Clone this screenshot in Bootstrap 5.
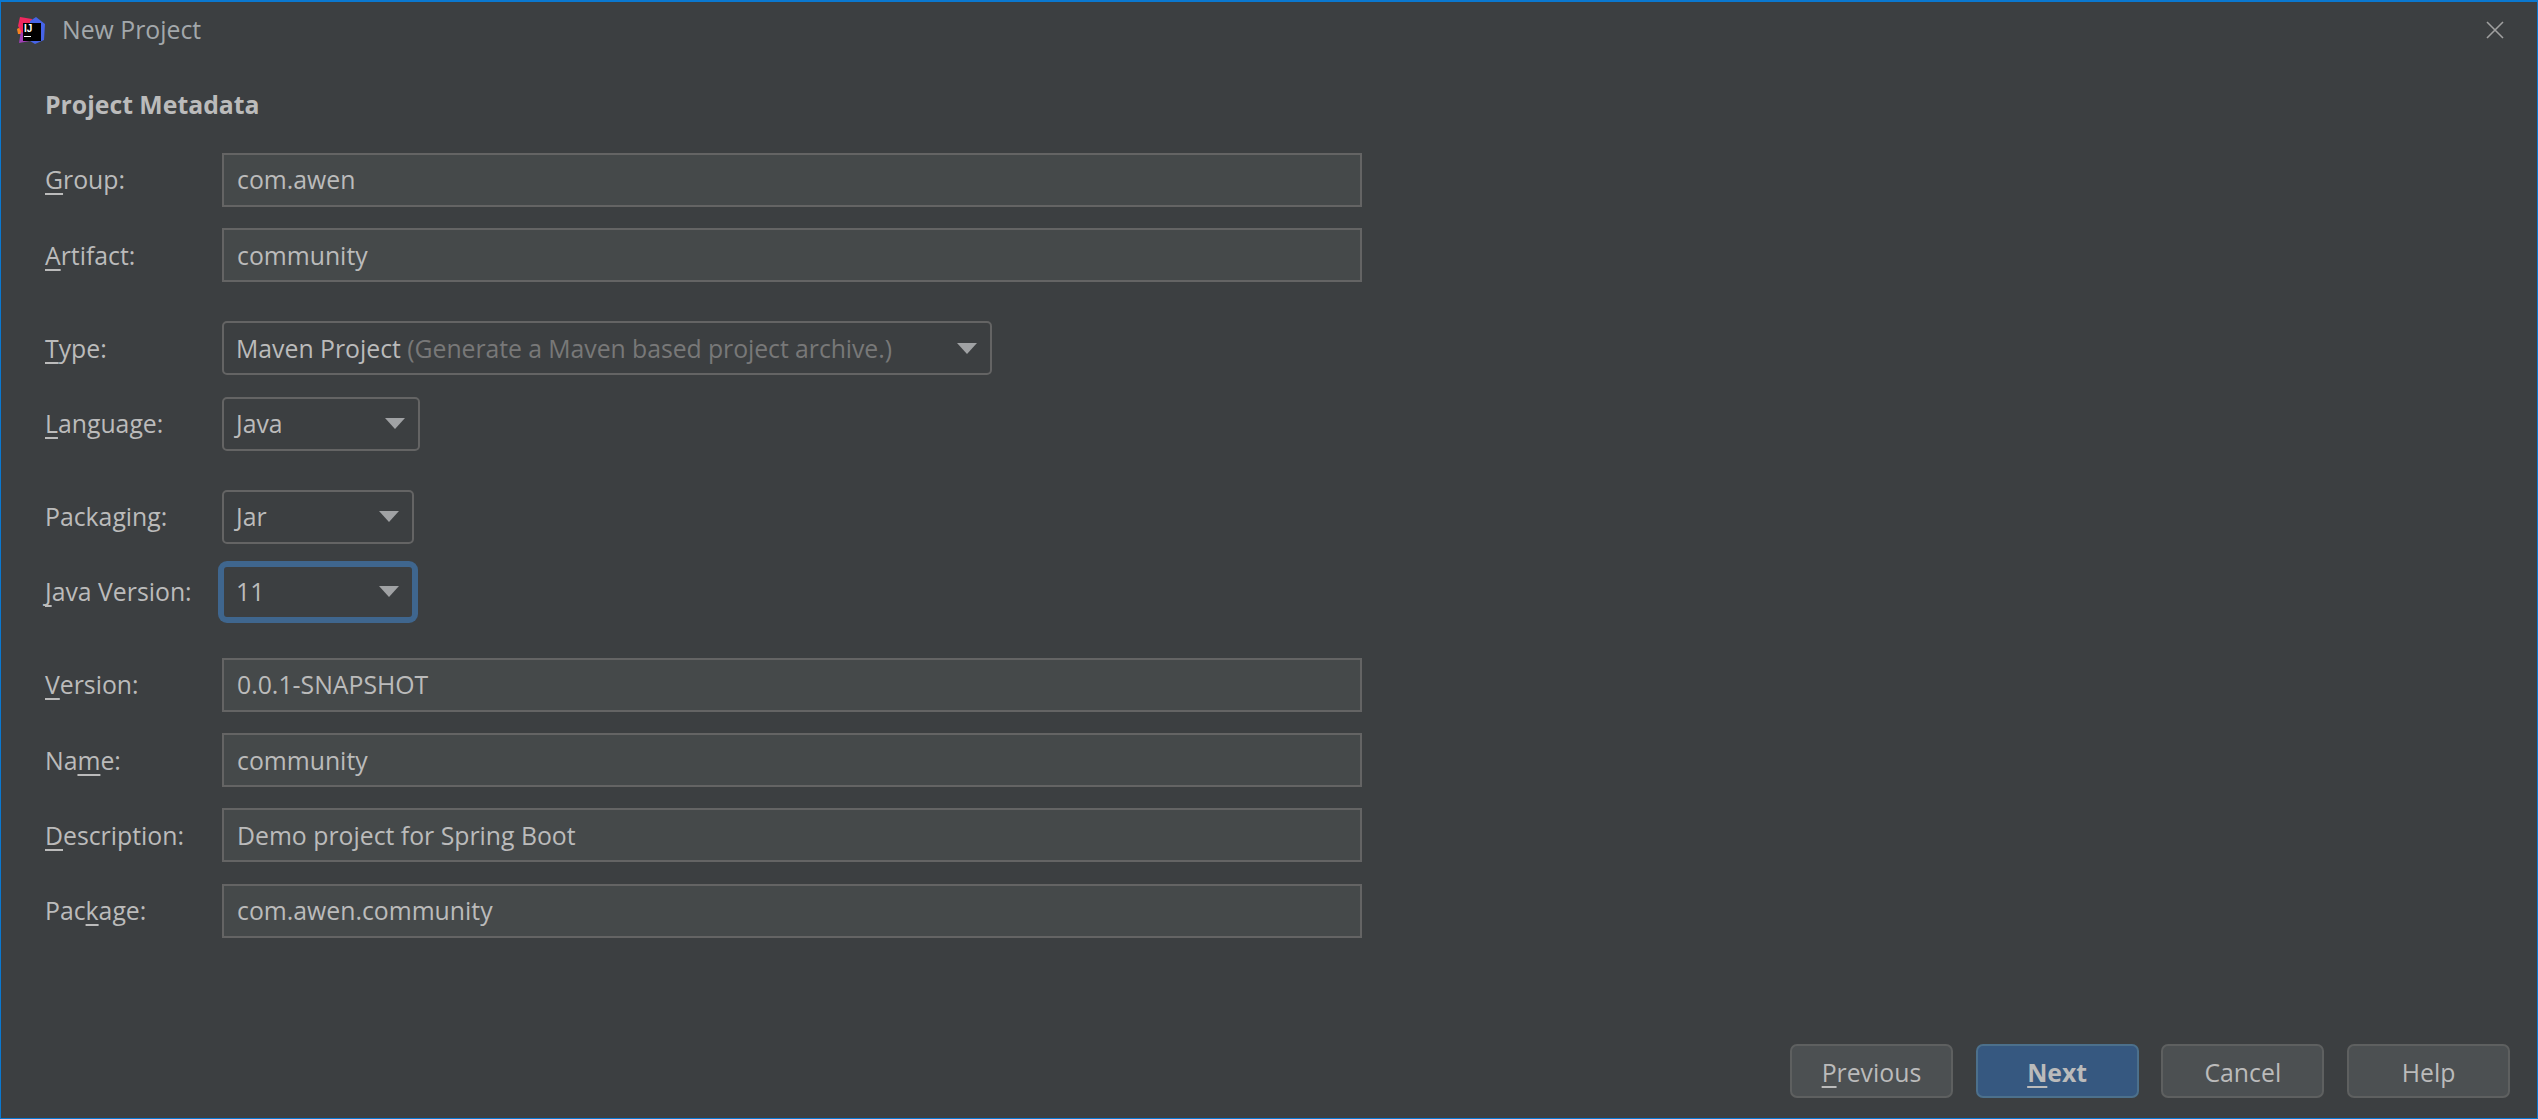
<!DOCTYPE html>
<html lang="en">
<head>
    <meta charset="UTF-8" />
    <title>New Project</title>
    <link href="https://cdn.jsdelivr.net/npm/bootstrap@5.3.2/dist/css/bootstrap.min.css" rel="stylesheet" />
    <style>
        html, body { height: 100%; }
        body { background: #3c3f41; color: #bbbbbb; font-family: "Open Sans", "Noto Sans", sans-serif; font-size: 24.8px; overflow: hidden; }
        u { text-decoration-thickness: 2px; text-underline-offset: 4px; }
        .win { height: 1119px; border: 1px solid #0a78d0; border-top-width: 2px; }
        .title-bar { height: 55px; padding-left: 16px; padding-right: 33px; }
        .app-logo { margin-top: 2px; }
        .win-title { color: #a3a8ab; margin-left: 17px; }
        .win-body { padding: 0 0 20px 44px; }
        .meta-head { font-weight: 700; margin: 30px 0 32px; line-height: 34px; font-size: 24.8px; }
        .fld-group { display: flex; flex-direction: column; gap: 21.3px; margin-bottom: 39px; }
        .fld-row { display: flex; align-items: center; height: 54px; }
        .fld-label { width: 177px; margin: 0; flex: none; }
        .fld-text { width: 1140px; height: 54px; background: #45494a; border: 2px solid #646464; border-radius: 0; color: #bbbbbb; font-size: 24.8px; padding: 0 0 0 13px; display: flex; align-items: center; }
        .fld-drop { height: 54px; background: #3c3f41; border: 2px solid #646464; border-radius: 5px; padding: 0 0 0 12px; display: flex; align-items: center; justify-content: space-between; }
        .fld-drop .arrow { width: 0; height: 0; border-left: 10px solid transparent; border-right: 10px solid transparent; border-top: 11px solid #a0a2a4; margin-right: 13px; }
        .w-type { width: 770px; }
        .w-lang { width: 198px; }
        .w-pack { width: 192px; }
        .fld-focus { border-color: #3f668e; box-shadow: 0 0 0 4px #3f668e; }
        .hint { color: #787878; letter-spacing: -0.06px; }
        .foot-bar { gap: 22.7px; padding-right: 27px; }
        .dlg-btn { width: 163px; height: 54px; background: #4c5052; border: 2px solid #5e6060; border-radius: 7px; color: #bbbbbb; font-size: 24.8px; padding: 3px 0 0; }
        .dlg-btn-main { background: #365880; border-color: #4c708c; font-weight: 700; }
    </style>
</head>
<body>
    <div class="win d-flex flex-column">
        <div class="title-bar d-flex align-items-center justify-content-between">
            <div class="d-flex align-items-center">
                <svg class="app-logo" width="28" height="28" viewBox="0 0 28 28">
                    <polygon points="0,12 5,9 6,17 1,17" fill="#f58220" />
                    <polygon points="2,26 4,14 14,20 13,24" fill="#a03fb5" />
                    <polygon points="3,0 15,2 14,12 5,16 1,9" fill="#f0285f" />
                    <polygon points="19,0 28,7 27,23 18,27 13,24 13,4" fill="#4664e8" />
                    <rect x="6" y="6" width="18" height="18" fill="#000" />
                    <text x="7" y="15" font-family="Liberation Sans, sans-serif" font-weight="700" font-size="10" fill="#fff">IJ</text>
                    <rect x="7" y="19" width="7" height="1" fill="#fff" />
                </svg>
                <span class="win-title">New Project</span>
            </div>
            <svg width="18" height="18" viewBox="0 0 18 18">
                <path d="M1 1 17 17M17 1 1 17" stroke="#a0a0a0" stroke-width="1.6" fill="none" />
            </svg>
        </div>

        <div class="win-body flex-grow-1 d-flex flex-column">
            <div class="meta-head">Project Metadata</div>

            <div class="fld-group">
                <div class="fld-row">
                    <label class="fld-label"><u>G</u>roup:</label>
                    <div class="form-control fld-text">com.awen</div>
                </div>
                <div class="fld-row">
                    <label class="fld-label"><u>A</u>rtifact:</label>
                    <div class="form-control fld-text">community</div>
                </div>
            </div>

            <div class="fld-group">
                <div class="fld-row">
                    <label class="fld-label"><u>T</u>ype:</label>
                    <div class="fld-drop w-type"><span>Maven Project <span class="hint">(Generate a Maven based project archive.)</span></span><span class="arrow"></span></div>
                </div>
                <div class="fld-row">
                    <label class="fld-label"><u>L</u>anguage:</label>
                    <div class="fld-drop w-lang"><span>Java</span><span class="arrow"></span></div>
                </div>
            </div>

            <div class="fld-group">
                <div class="fld-row">
                    <label class="fld-label">Packa<u>g</u>ing:</label>
                    <div class="fld-drop w-pack"><span>Jar</span><span class="arrow"></span></div>
                </div>
                <div class="fld-row">
                    <label class="fld-label"><u>J</u>ava Version:</label>
                    <div class="fld-drop w-pack fld-focus"><span>11</span><span class="arrow"></span></div>
                </div>
            </div>

            <div class="fld-group">
                <div class="fld-row">
                    <label class="fld-label"><u>V</u>ersion:</label>
                    <div class="form-control fld-text">0.0.1-SNAPSHOT</div>
                </div>
                <div class="fld-row">
                    <label class="fld-label">Na<u>m</u>e:</label>
                    <div class="form-control fld-text">community</div>
                </div>
                <div class="fld-row">
                    <label class="fld-label"><u>D</u>escription:</label>
                    <div class="form-control fld-text">Demo project for Spring Boot</div>
                </div>
                <div class="fld-row">
                    <label class="fld-label">Pac<u>k</u>age:</label>
                    <div class="form-control fld-text">com.awen.community</div>
                </div>
            </div>

            <div class="foot-bar d-flex justify-content-end mt-auto">
                <button type="button" class="btn dlg-btn"><u>P</u>revious</button>
                <button type="button" class="btn dlg-btn dlg-btn-main"><u>N</u>ext</button>
                <button type="button" class="btn dlg-btn">Cancel</button>
                <button type="button" class="btn dlg-btn">Help</button>
            </div>
        </div>
    </div>
    <script src="https://cdn.jsdelivr.net/npm/bootstrap@5.3.2/dist/js/bootstrap.bundle.min.js"></script>
</body>
</html>
